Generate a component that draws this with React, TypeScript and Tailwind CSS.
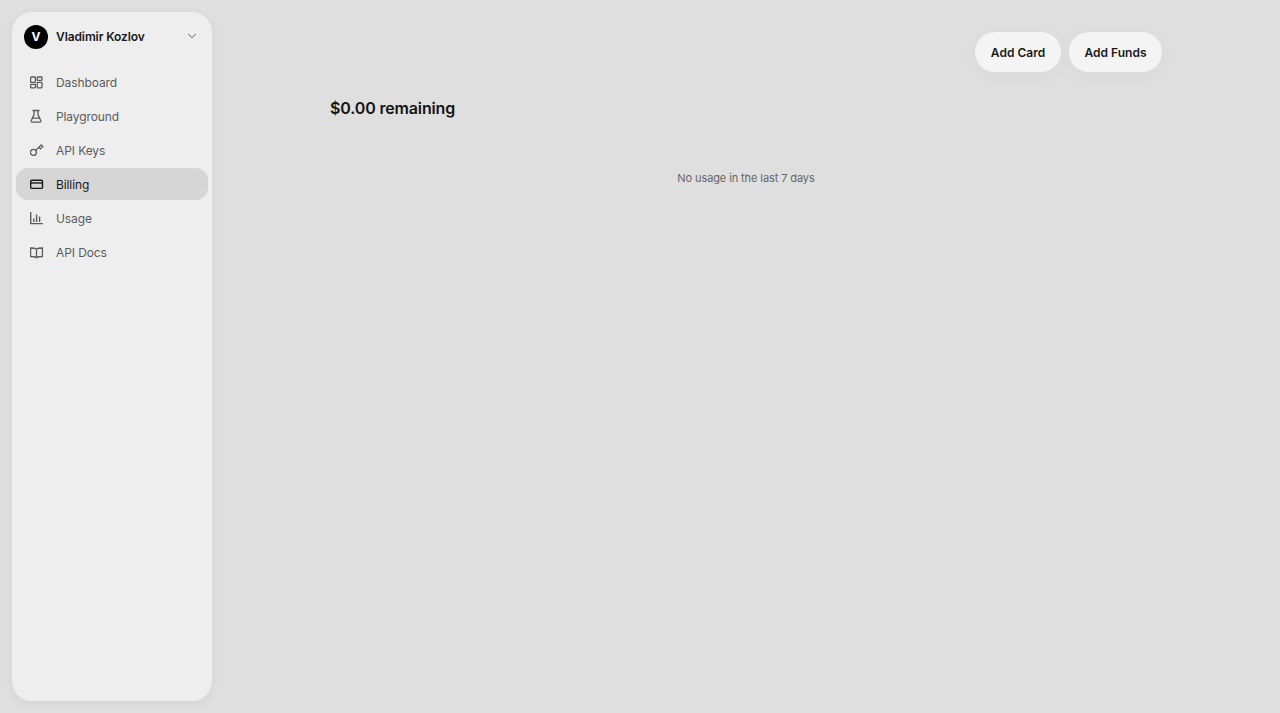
import { ChevronDown } from 'lucide-react';
import type { ReactNode } from 'react';

const sw = { fill: 'none', stroke: 'currentColor', strokeWidth: 1.3 };

const icons: Record<string, ReactNode> = {
  dashboard: (
    <svg width="14" height="14" viewBox="0 0 14 14" {...sw}>
      <rect x="0.6" y="2" width="4.8" height="5.4" rx="0.7" />
      <rect x="7.2" y="2" width="4.8" height="3.4" rx="0.7" />
      <rect x="0.6" y="9.4" width="4.8" height="3.4" rx="0.7" />
      <rect x="7.2" y="7.4" width="4.8" height="5.4" rx="0.7" />
    </svg>
  ),
  playground: (
    <svg width="14" height="14" viewBox="0 0 14 14" {...sw}>
      <path d="M2.5 1.5h7M4 1.5v4L1.3 11.5c-.4 1 .1 1.7 1 1.7h7.4c.9 0 1.4-.7 1-1.7L8 5.5v-4M2.8 9.2h6.4" />
    </svg>
  ),
  key: (
    <svg width="14" height="14" viewBox="0 0 14 14" {...sw}>
      <circle cx="3.4" cy="9.4" r="3" />
      <path d="M5.6 7.4L11 2.2M8.8 4.4l1.6 1.5 2.4-2.3-1.6-1.6z" />
    </svg>
  ),
  billing: (
    <svg width="14" height="14" viewBox="0 0 14 14" {...sw} strokeWidth="1.4">
      <rect x="0.7" y="3.2" width="11.8" height="8.2" rx="1.2" />
      <path d="M0.7 6h11.8" />
    </svg>
  ),
  usage: (
    <svg width="14" height="14" viewBox="0 0 14 14" {...sw}>
      <path d="M0.7 1v11.6h12.2M3.8 7.5v3.4M6.6 3.5v7.4M9.6 5.5v5.4" strokeWidth="1.4" />
    </svg>
  ),
  docs: (
    <svg width="14" height="14" viewBox="0 0 14 14" {...sw}>
      <path d="M6.5 4C5.5 3.3 4 3 .6 3v8.5c3.4 0 4.9.3 5.9 1 1-.7 2.5-1 5.9-1V3C9 3 7.5 3.3 6.5 4zM6.5 4v9.5" />
    </svg>
  ),
};

const navItems = [
  { label: 'Dashboard', icon: 'dashboard' },
  { label: 'Playground', icon: 'playground' },
  { label: 'API Keys', icon: 'key' },
  { label: 'Billing', icon: 'billing', active: true },
  { label: 'Usage', icon: 'usage' },
  { label: 'API Docs', icon: 'docs' },
];

export default function App() {
  return (
    <div className="flex h-screen bg-[#dfdfdf] font-['Inter',sans-serif] overflow-hidden">
      <div className="p-3 pr-0 h-full">
        <aside className="w-[200px] h-full bg-[#eeeeee] rounded-[20px] shadow-[0_2px_10px_rgba(0,0,0,0.06)] px-1 pt-[9px]">
          <div className="flex items-center h-8 px-2 mb-[13px]">
            <div className="w-6 h-6 rounded-full bg-black text-white flex items-center justify-center text-[12px] font-bold">
              V
            </div>
            <span className="ml-2 text-[12px] font-semibold tracking-[-0.1px] text-[#1a1a1a] flex-1">Vladimir Kozlov</span>
            <ChevronDown size={14} strokeWidth={1.5} className="text-[#444] mr-[1px] -mt-[2px]" />
          </div>
          <nav className="flex flex-col gap-[2px]">
            {navItems.map((item) => (
              <div
                key={item.label}
                className={
                  item.active
                    ? 'flex items-center h-8 pl-[14px] rounded-[12px] bg-[#d6d6d6] text-[#1a1a1a]'
                    : 'flex items-center h-8 pl-[14px] rounded-[12px] text-[#5c5c5c]'
                }
              >
                {icons[item.icon]}
                <span className="ml-[12px] pt-[2px] text-[12px] tracking-[-0.1px]">{item.label}</span>
              </div>
            ))}
          </nav>
        </aside>
      </div>
      <main className="flex-1">
        <div className="w-[832px] mx-auto pt-8">
          <div className="flex justify-end gap-2">
            <button className="h-10 w-[86px] pt-[2px] rounded-[20px] bg-[#f4f4f4] text-[12px] font-semibold text-[#1a1a1a] shadow-[0_4px_20px_rgba(0,0,0,0.03)]">
              Add Card
            </button>
            <button className="h-10 w-[93px] pt-[2px] rounded-[20px] bg-[#f4f4f4] text-[12px] font-semibold text-[#1a1a1a] shadow-[0_4px_20px_rgba(0,0,0,0.03)]">
              Add Funds
            </button>
          </div>
          <h2 className="mt-[24px] text-[16px] leading-[24px] font-semibold tracking-[-0.15px] text-[#141414]">$0.00 remaining</h2>
          <p className="mt-[50px] text-center text-[11px] leading-[16px] tracking-[-0.1px] text-[#666666]">No usage in the last 7 days</p>
        </div>
      </main>
    </div>
  );
}
